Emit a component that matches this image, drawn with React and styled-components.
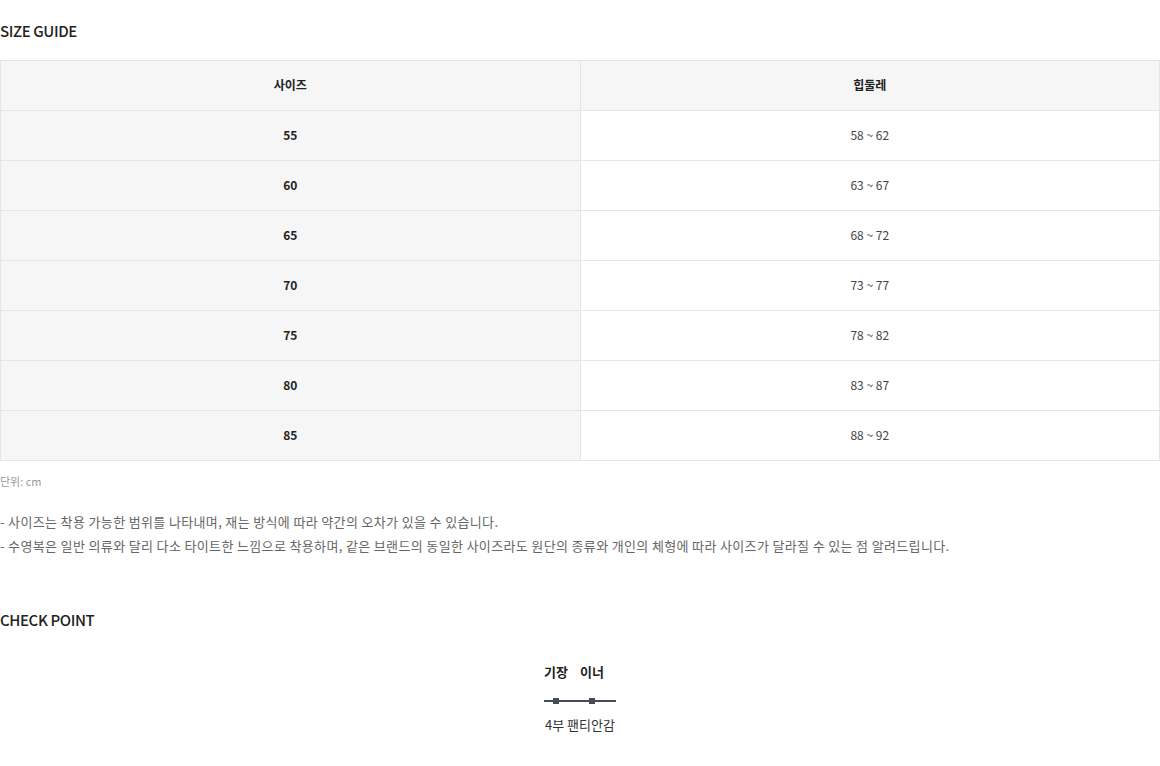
import React from 'react';
import styled, { createGlobalStyle } from 'styled-components';

const GlobalStyle = createGlobalStyle`
  body {
    margin: 0;
    background: #fff;
    font-family: 'Noto Sans CJK KR', 'Noto Sans', sans-serif;
    color: #222;
  }
`;

const Page = styled.div`
  width: 1160px;
  padding-top: 20px;
`;

const Title = styled.h2`
  margin: 0 0 18px;
  font-size: 15px;
  line-height: 22px;
  font-weight: 500;
  color: #222;
  letter-spacing: -0.4px;
`;

const Table = styled.table`
  width: 100%;
  border-collapse: collapse;
  table-layout: fixed;
`;

const Cell = styled.td`
  height: 46px;
  padding: 0 0 3px;
  border: 1px solid #e5e5e5;
  text-align: center;
  font-size: 12px;
  color: ${p => (p.$head ? '#222' : '#444')};
  font-weight: ${p => (p.$head ? 700 : 400)};
  background: ${p => (p.$shade ? '#f6f6f6' : '#fff')};
`;

const Unit = styled.p`
  margin: 12px 0 0;
  font-size: 11px;
  line-height: 16px;
  color: #999;
`;

const Notes = styled.ul`
  list-style: none;
  margin: 21px 0 0;
  padding: 0;
  font-size: 13px;
  line-height: 24px;
  letter-spacing: 0.35px;
  color: #666;
`;

const Section = styled.div`
  margin-top: 51px;
`;

const CheckBox = styled.div`
  display: flex;
  flex-direction: column;
  align-items: center;
  padding-top: 13px;
`;

const Labels = styled.div`
  display: flex;
  gap: 12px;
  width: 72px;
  font-size: 13px;
  line-height: 20px;
  font-weight: 700;
  color: #222;
`;

const Bar = styled.svg`
  display: block;
  margin: 15px 0 11px;
`;

const Caption = styled.div`
  font-size: 13px;
  line-height: 18px;
  color: #333;
`;

const rows = [
  ['55', '58 ~ 62'],
  ['60', '63 ~ 67'],
  ['65', '68 ~ 72'],
  ['70', '73 ~ 77'],
  ['75', '78 ~ 82'],
  ['80', '83 ~ 87'],
  ['85', '88 ~ 92'],
];

export default function App() {
  return (
    <Page>
      <GlobalStyle />
      <Title>SIZE GUIDE</Title>
      <Table>
        <tbody>
          <tr>
            <Cell $head $shade>사이즈</Cell>
            <Cell $head $shade>힙둘레</Cell>
          </tr>
          {rows.map(([size, hip]) => (
            <tr key={size}>
              <Cell $head $shade>{size}</Cell>
              <Cell>{hip}</Cell>
            </tr>
          ))}
        </tbody>
      </Table>
      <Unit>단위: cm</Unit>
      <Notes>
        <li>- 사이즈는 착용 가능한 범위를 나타내며, 재는 방식에 따라 약간의 오차가 있을 수 있습니다.</li>
        <li>- 수영복은 일반 의류와 달리 다소 타이트한 느낌으로 착용하며, 같은 브랜드의 동일한 사이즈라도 원단의 종류와 개인의 체형에 따라 사이즈가 달라질 수 있는 점 알려드립니다.</li>
      </Notes>
      <Section>
        <Title>CHECK POINT</Title>
        <CheckBox>
          <Labels>
            <span>기장</span>
            <span>이너</span>
          </Labels>
          <Bar width="72" height="8" viewBox="0 0 72 8">
            <rect x="0" y="3" width="72" height="2" fill="#454b5a" />
            <rect x="9" y="1" width="6" height="6" fill="#454b5a" />
            <rect x="45" y="1" width="6" height="6" fill="#454b5a" />
          </Bar>
          <Caption>4부 팬티안감</Caption>
        </CheckBox>
      </Section>
    </Page>
  );
}
